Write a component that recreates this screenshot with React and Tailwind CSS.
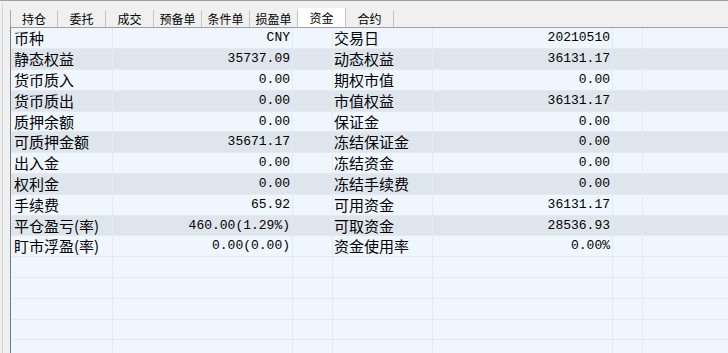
import React from 'react';

// 资金 tab of a futures trading client: tab strip + fund grid
const tabs = ['持仓', '委托', '成交', '预备单', '条件单', '损盈单', '资金', '合约'];

const rows = [
  ['币种', 'CNY', '交易日', '20210510'],
  ['静态权益', '35737.09', '动态权益', '36131.17'],
  ['货币质入', '0.00', '期权市值', '0.00'],
  ['货币质出', '0.00', '市值权益', '36131.17'],
  ['质押余额', '0.00', '保证金', '0.00'],
  ['可质押金额', '35671.17', '冻结保证金', '0.00'],
  ['出入金', '0.00', '冻结资金', '0.00'],
  ['权利金', '0.00', '冻结手续费', '0.00'],
  ['手续费', '65.92', '可用资金', '36131.17'],
  ['平仓盈亏(率)', '460.00(1.29%)', '可取资金', '28536.93'],
  ['盯市浮盈(率)', '0.00(0.00)', '资金使用率', '0.00%'],
];

const cjk = "font-['Noto_Sans_CJK_SC',sans-serif]";
const mono = "font-['Liberation_Mono','Noto_Sans_CJK_SC',monospace]";

const Row = ({ data, dark, short }) => {
  const bg = dark ? 'bg-[#dfe5ec]' : 'bg-[#eff6fe]';
  const h = short ? 'h-[20px] leading-[19px]' : 'h-[21px] leading-[20px]';
  const [l1, v1, l2, v2] = data || ['', '', '', ''];
  return (
    <div className={`flex shrink-0 border-b border-[#e6e9ed] ${h} ${bg} text-black`}>
      <div className={`w-[102px] shrink-0 border-r border-[#e6e9ed] pl-[3px] text-[15px] whitespace-nowrap ${cjk}`}>{l1}</div>
      <div className={`w-[180px] shrink-0 border-r border-[#e6e9ed] pr-[2px] text-right text-[13px] whitespace-nowrap ${mono}`}>{v1}</div>
      <div className="w-[40px] shrink-0 border-r border-[#e6e9ed]" />
      <div className={`w-[100px] shrink-0 border-r border-[#e6e9ed] pl-[1px] text-[15px] whitespace-nowrap ${cjk}`}>{l2}</div>
      <div className={`w-[180px] shrink-0 border-r border-[#e6e9ed] pr-[2px] text-right text-[13px] whitespace-nowrap ${mono}`}>{v2}</div>
      <div className="w-[30px] shrink-0 border-r border-[#e6e9ed]" />
      <div className="flex-1" />
    </div>
  );
};

export default function App() {
  const filler = Array.from({ length: 6 });

  return (
    <div className="flex h-[353px] w-[728px] overflow-hidden border-t border-[#a0a0a0] bg-[#f0f0f0]">
      {/* left gutter */}
      <div className="w-[10px] shrink-0 pl-[2px] pt-[2px]">
        <div className="h-full border-l border-[#d4d4d4]" />
      </div>

      <div className="flex min-w-0 flex-1 flex-col">
        {/* tab strip */}
        <div className="flex h-[26px] shrink-0 items-end">
          {tabs.map((t) => {
            const active = t === '资金';
            return (
              <div
                key={t}
                className={`flex w-[48px] shrink-0 items-center justify-center border-r border-[#c4c4c4] text-[12px] text-black ${cjk} ${
                  active ? 'h-[19px] bg-white' : 'h-[17px] bg-[#f0f0f0]'
                } ${t === '持仓' ? 'border-l border-l-[#a8a8a8]' : ''}`}
              >
                <span className="leading-none">{t}</span>
              </div>
            );
          })}
        </div>

        {/* fund grid */}
        <div className="flex min-h-0 flex-1 flex-col overflow-hidden border-l border-t border-l-[#7c7c7c] border-t-[#a0a0a0] bg-[#eff6fe]">
          {rows.map((r, i) => (
            <Row key={r[0]} data={r} dark={i % 2 === 1} short={i % 5 === 4} />
          ))}
          {filler.map((_, i) => (
            <Row key={`f${i}`} short={(i + rows.length) % 5 === 4} />
          ))}
        </div>
      </div>
    </div>
  );
}
